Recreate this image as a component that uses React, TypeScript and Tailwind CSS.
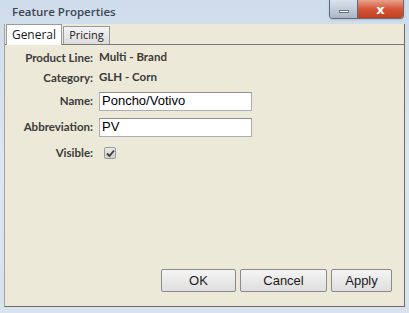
export default function App() {
  const labels = "font-['Lato',sans-serif] text-[11.5px] font-bold text-[#3a3a3a]";
  return (
    <div className="w-[409px] h-[313px] bg-gradient-to-b from-[#cfdceb] via-[#dce6f0] to-[#d9e3ee] flex flex-col overflow-hidden">
      {/* title bar */}
      <div className="h-[24px] flex items-start justify-between pl-[12px] pr-[5px]">
        <span className="mt-[3px] font-['Open_Sans',sans-serif] text-[11.5px] font-semibold text-[#3b4654]">Feature Properties</span>
        <div className="flex h-[19px] rounded-b-[4px] overflow-hidden border border-t-0 border-[#5d6b7b] shadow-sm">
          <div className="w-[28px] bg-gradient-to-b from-[#d9e2ec] to-[#a9b7c6] flex items-center justify-center border-r border-[#5d6b7b]">
            <div className="w-[10px] h-[3px] bg-white border border-[#6a7685] mt-[4px]" />
          </div>
          <div className="w-[45px] bg-gradient-to-b from-[#e8a08a] via-[#d4553a] to-[#c2401f] flex items-center justify-center">
            <span className="font-['DejaVu_Sans',sans-serif] text-[13px] font-bold text-white leading-none">x</span>
          </div>
        </div>
      </div>
      {/* content */}
      <div className="mx-[4px] h-[283px] bg-[#ece9d8] border-r border-b border-[#6b6b6b] border-l border-l-[#a0a0a0] flex flex-col">
        <div className="flex items-end h-[21px] pl-[1px] border-b border-[#7a7a7a] relative">
          <div className="h-[21px] w-[56px] bg-white border border-b-0 border-[#9a9a9a] flex items-center justify-center font-['Open_Sans',sans-serif] text-[12px] text-[#1a1a1a] relative top-[1px]">
            General
          </div>
          <div className="h-[18px] w-[47px] ml-[1px] bg-gradient-to-b from-[#f4f4f4] to-[#dcdcdc] border border-b-0 border-[#9a9a9a] flex items-center justify-center font-['Open_Sans',sans-serif] text-[11px] text-[#222]">
            Pricing
          </div>
        </div>
        <div className="grid grid-cols-[88px_1fr] gap-x-[6px] pt-[3px] items-center">
          <span className={`${labels} text-right h-[20px] leading-[20px]`}>Product Line:</span>
          <span className={`${labels} h-[20px] leading-[18px]`}>Multi - Brand</span>
          <span className={`${labels} text-right h-[20px] leading-[20px]`}>Category:</span>
          <span className={`${labels} h-[20px] leading-[18px]`}>GLH - Corn</span>
          <span className={`${labels} text-right h-[26px] leading-[26px]`}>Name:</span>
          <div className="h-[26px] flex items-center">
            <div className="w-[153px] h-[19px] bg-white border border-[#abadb3] border-t-[#8e8f8f] flex items-center pl-[2px] font-['Liberation_Sans',sans-serif] text-[13px] text-black">Poncho/Votivo</div>
          </div>
          <span className={`${labels} text-right h-[26px] leading-[26px]`}>Abbreviation:</span>
          <div className="h-[26px] flex items-center">
            <div className="w-[153px] h-[19px] bg-white border border-[#abadb3] border-t-[#8e8f8f] flex items-center pl-[2px] font-['Liberation_Sans',sans-serif] text-[13px] text-black">PV</div>
          </div>
          <span className={`${labels} text-right h-[26px] leading-[26px]`}>Visible:</span>
          <div className="h-[26px] flex items-center pl-[5px]">
            <div className="w-[12px] h-[12px] rounded-[2px] border border-[#9a9a9a] bg-gradient-to-b from-[#e8e8e8] to-[#d0d0d0] flex items-center justify-center">
              <svg width="9" height="9" viewBox="0 0 9 9">
                <path d="M1 4.5 L3.5 7 L8 1.5" stroke="#3a3a3a" strokeWidth="1.8" fill="none" />
              </svg>
            </div>
          </div>
        </div>
        <div className="flex-1" />
        <div className="flex justify-end gap-[4px] pr-[12px] pb-[14px]">
          {[["OK", "w-[75px]"], ["Cancel", "w-[87px]"], ["Apply", "w-[61px]"]].map(([t, w]) => (
            <div key={t} className={`${w} h-[23px] rounded-[2px] border border-[#8a8a8a] bg-gradient-to-b from-[#f5f5f5] to-[#dedede] flex items-center justify-center font-['Liberation_Sans',sans-serif] text-[13px] text-[#1a1a1a]`}>
              {t}
            </div>
          ))}
        </div>
      </div>
    </div>
  );
}
